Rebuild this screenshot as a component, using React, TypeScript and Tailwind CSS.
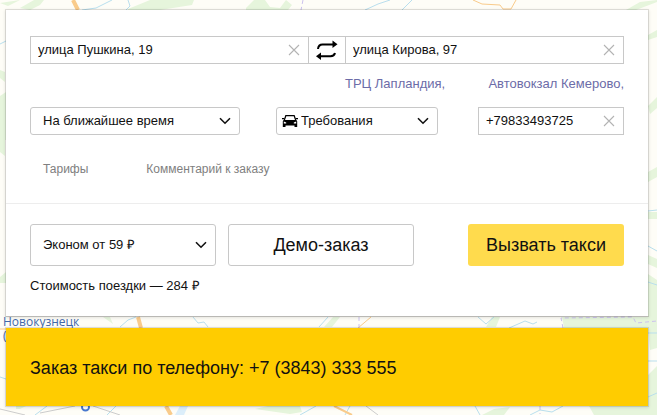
import { useState, type ReactNode } from 'react'
import { clsx } from 'clsx'

const FIELD = 'border border-[#c8c8c8] bg-white text-[13px] text-[#111] outline-none'

function Chevron({ className }: { className?: string }) {
    return (
        <svg viewBox="0 0 12 8" className={clsx('pointer-events-none absolute top-1/2 h-2 w-3 -translate-y-1/2', className)}>
            <path d="M1 1.2 6 6.2 11 1.2" fill="none" stroke="#111" strokeWidth="1.6" />
        </svg>
    )
}

function SwapIcon() {
    return (
        <svg viewBox="0 0 22 20" className="h-5 w-[22px]" fill="none" stroke="#000" strokeWidth="2">
            <path d="M2 9C2.300 6 3.500 4.500 6.500 4.500H17" />
            <path d="M16.500 0.500 21.500 4.200 16.500 8Z" fill="#000" stroke="none" />
            <path d="M19 13C18.500 15 17 16.200 14.500 16.200H4" />
            <path d="M5 12.400 0 16.200 5 20Z" fill="#000" stroke="none" />
        </svg>
    )
}

function CarIcon() {
    return (
        <svg viewBox="0 0 16 13" className="pointer-events-none absolute top-1/2 left-[6px] h-[13px] w-4 -translate-y-1/2">
            <path d="M3.800 1.200h8.400L13.800 6H2.200z" fill="#fff" stroke="#000" strokeWidth="1.200" />
            <path d="M0 3.400h2.400v1.400H0zM13.600 3.400H16v1.400h-2.400z" />
            <path d="M2 5.400h12l1.200 1.400V12.500h-2.700V11h-9v1.500H.8V6.800z" />
            <path d="M1.800 7 4.200 7.900v1H1.800zM14.200 7l-2.400.9v1h2.400z" fill="#fff" />
        </svg>
    )
}

interface ClearableProps {
    label: string
    type?: string
    initial: string
    className?: string
}

function ClearableInput({ label, type = 'text', initial, className }: ClearableProps) {
    const [value, setValue] = useState(initial)

    return (
        <div className={clsx('relative', className)}>
            <input
                type={type}
                aria-label={label}
                value={value}
                onChange={e => setValue(e.target.value)}
                className={clsx(FIELD, 'h-7 w-full pr-8 pb-[2px] pl-[7px]')}
            />
            <button
                type="button"
                aria-label="Очистить"
                onClick={() => setValue('')}
                className="absolute inset-y-0 right-0 flex w-[30px] items-center justify-center"
            >
                <svg viewBox="0 0 12 12" className="size-3">
                    <path d="M1 1 11 11M11 1 1 11" stroke="#b3b3b3" strokeWidth="1.1" />
                </svg>
            </button>
        </div>
    )
}

interface PickerProps {
    label: string
    option: string
    icon?: ReactNode
    className: string
    selectClass: string
}

function Picker({ label, option, icon, className, selectClass }: PickerProps) {
    return (
        <div className={clsx('relative', className)}>
            <select aria-label={label} className={clsx(FIELD, 'w-full appearance-none rounded-[3px]', selectClass)}>
                <option>{option}</option>
            </select>
            {icon}
            <Chevron className="right-[9px]" />
        </div>
    )
}

function MapBackdrop() {
    return (
        <svg
            className="absolute inset-0 h-full w-full"
            viewBox="0 0 657 415"
            preserveAspectRatio="xMinYMin slice"
            fill="none"
            aria-hidden="true"
        >
            <rect width="657" height="415" fill="#fefdf7" />

            {/* Forests */}
            <g fill="#e6f5dc">
                <path d="M20 8 34 0H44L40 5 30 10ZM0 3 20 0 8 6ZM128 9 150 0H194L192 5 160 10H128ZM246 8 254 0H265L270 7 280 8 286 0 292 5 288 10H246Z" />
                <path d="M626 10 640 2 657 0V2L636 10ZM648 35 657 30V37L648 40ZM648 106 657 97V108L650 114ZM648 172 657 167V177L648 182ZM648 212H657V219H648ZM648 255 657 259V268L648 264Z" />
                <path d="M648 274 657 280V320H648ZM0 70 5 72V82L0 78ZM0 96 6 92V140H0ZM0 140H5V156L0 152ZM0 277 6 272V283H0Z" />
                <path d="M562 317H657V328H564ZM648 328H657V348L650 350ZM648 375 657 366V415H594L589 406H648ZM486 327 492 317H500L496 327ZM103 317H110L113 324ZM324 327 333 317H340L332 327Z" />
                <path d="M16 406H26L20 409H16ZM255 409 268 406H300L302 412 290 414ZM482 415 494 409 510 407 504 415H482Z" />
            </g>
            <path d="M175 415 180 406H188L184 415Z" fill="#dceefa" />

            {/* Rivers */}
            <g stroke="#b9dfee" strokeWidth="1">
                <path d="M82 10 96 8 112 0M128 0 130 6 126 10M365 10 378 4 390 0M402 10 412 0M0 44 6 41" />
                <path d="M648 211 657 210M648 246 657 251M648 282 657 285M648 333H657M648 361H657M648 397 657 393" />
                <path d="M120 327 128 320 136 317M193 317 198 323 204 322 208 327M319 327 328 317M478 317 486 324 494 317M509 328 525 321 533 324 537 322" />
                <path d="M35 415 47 406M107 415 116 406M300 415 316 406M345 415 350 406M475 406 480 415M530 415 540 410 552 412 563 406M0 377 6 379" />
            </g>

            {/* Roads */}
            <g stroke="#f9cb8b">
                <path d="M73 0 78 10M138 317 141 328M166 406 171 415" strokeWidth="4" />
                <path d="M334 406 352 415" strokeWidth="2" />
                <path d="M473 0 482 4 500 5 503 9 511 9 516 0M358 328 371 317M0 329H6" strokeWidth="1" />
            </g>
            <path d="M0 409 25 415M40 413 75 406M93 406 120 415M366 406 378 415" stroke="#ccc" />

            {/* Region borders */}
            <path d="M303 0 301 10M359 317V328M563 328 561 318 633 317 636 323 657 321M540 406V414" stroke="#ccc2ee" strokeDasharray="4 3" />

            <circle cx="85.500" cy="407" r="3.500" fill="#fff" stroke="#4878cf" strokeWidth="2" />
            <text x="3" y="326" fontSize="12" fill="#4268aa" fontFamily='"Open Sans", sans-serif'>Новокузнецк</text>
            <text x="3" y="340" fontSize="12" fill="#4268aa" fontFamily='"Open Sans", sans-serif'>(</text>
        </svg>
    )
}

export default function App() {
    return (
        <div className="relative min-h-screen overflow-hidden font-['Liberation_Sans',Arial,sans-serif] text-[13px] text-[#111]">
            <MapBackdrop />

            <main className="relative flex flex-col gap-[10px] pt-[9px] pr-2 pb-2 pl-[5px]">
                <form
                    onSubmit={e => e.preventDefault()}
                    className="border border-black/10 border-b-black/20 bg-white bg-clip-padding shadow-[0_1px_3px_rgba(0,0,0,0.1)]"
                >
                    {/* Route */}
                    <div className="px-6 pt-[26px] pb-6">
                        <div className="flex">
                            <ClearableInput label="Откуда" initial="улица Пушкина, 19" className="flex-1" />
                            <button
                                type="button"
                                aria-label="Поменять местами"
                                className="flex h-7 w-9 items-center justify-center border-y border-[#c8c8c8]"
                            >
                                <SwapIcon />
                            </button>
                            <ClearableInput label="Куда" initial="улица Кирова, 97" className="flex-1" />
                        </div>

                        <div className="mt-[10px] flex gap-9 leading-5 text-[#6c6ca8]">
                            <div className="flex-1" />
                            <div className="flex flex-1 justify-between whitespace-nowrap">
                                <a href="#mall">ТРЦ Лапландия,</a>
                                <a href="#station">Автовокзал Кемерово,</a>
                            </div>
                        </div>

                        <div className="mt-[13px] flex gap-9">
                            <Picker
                                label="Время подачи"
                                option="На ближайшее время"
                                className="w-[210px]"
                                selectClass="h-7 pl-3"
                            />
                            <Picker
                                label="Требования"
                                option="Требования"
                                icon={<CarIcon />}
                                className="w-[162px]"
                                selectClass="h-7 pl-6"
                            />
                            <ClearableInput label="Телефон" type="tel" initial="+79833493725" className="ml-auto w-[146px]" />
                        </div>

                        <div className="mt-6 flex gap-[58px] pl-[13px] text-[12px] leading-5 text-[#808080]">
                            <button type="button">Тарифы</button>
                            <button type="button">Комментарий к заказу</button>
                        </div>
                    </div>

                    {/* Order */}
                    <div className="border-t border-[#ededed] px-6 py-5">
                        <div className="flex gap-3">
                            <Picker
                                label="Тариф"
                                option="Эконом от 59 ₽"
                                className="w-[186px]"
                                selectClass="h-[42px] pl-3"
                            />
                            <button type="button" className="h-[42px] w-[186px] rounded-[3px] border border-[#c8c8c8] text-[18px]">
                                Демо-заказ
                            </button>
                            <button type="submit" className="ml-auto h-[42px] w-[156px] rounded-[3px] bg-[#ffdb4d] text-[18px]">
                                Вызвать такси
                            </button>
                        </div>
                        <p className="mt-[10px] leading-5">Стоимость поездки — 284 ₽</p>
                    </div>
                </form>

                <section className="border border-black/10 bg-[#fc0] bg-clip-padding px-6 pt-[26px] pb-6 text-[18px] leading-7 shadow-[0_1px_3px_rgba(0,0,0,0.1)]">
                    Заказ такси по телефону: +7 (3843) 333 555
                </section>
            </main>
        </div>
    )
}
